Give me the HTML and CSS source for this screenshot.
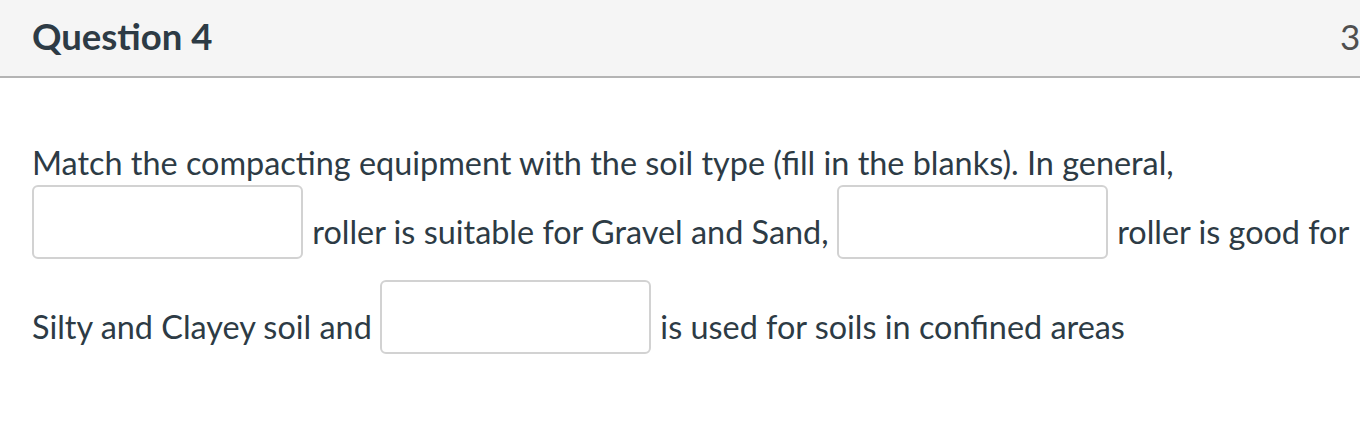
FILE: index.html
```html
<!DOCTYPE html>
<html lang="en">
<head>
<meta charset="utf-8">
<title>Question 4</title>
<link rel="stylesheet" href="styles.css">
</head>
<body>
<div class="quiz-question">
  <div class="header">
    <h2 class="title">Question 4</h2>
    <span class="points">3 pts</span>
  </div>
  <div class="body">
    <p class="text">Match the compacting equipment with the soil type (fill in the blanks). In general, <input class="blank" type="text" aria-label="Blank 1"> roller is suitable for Gravel and Sand, <input class="blank" type="text" aria-label="Blank 2"> roller is good for Silty and Clayey soil and <input class="blank" type="text" aria-label="Blank 3"> is used for soils in confined areas</p>
  </div>
</div>
</body>
</html>
```
FILE: styles.css
```css
html, body {
  margin: 0;
  padding: 0;
  background: #ffffff;
}
body {
  font-family: Lato, "Open Sans", sans-serif;
  color: #2d3b45;
  overflow: hidden;
}
.quiz-question {
  width: 1400px;
}
.header {
  display: flex;
  justify-content: space-between;
  align-items: center;
  height: 72px;
  background: #f5f5f5;
  border-bottom: 2px solid #b4b4b4;
  padding: 0 0 4px 32px;
}
.title {
  margin: 0;
  font-size: 36.5px;
  font-weight: 700;
  color: #2d3b45;
}
.points {
  font-size: 35px;
  color: #4f4f4f;
  white-space: nowrap;
  width: 60px;
}
.body {
  width: 1328px;
  padding: 61px 0 0 32px;
}
.text {
  margin: 0;
  font-size: 32.4px;
  line-height: 48.75px;
}
.blank {
  display: inline-block;
  box-sizing: border-box;
  width: 271px;
  height: 74px;
  margin: -2.5px 1px 23.5px 0;
  padding: 0 10px;
  border: 2px solid #d2d2d2;
  border-radius: 6px;
  background: #fff;
  vertical-align: middle;
  font: inherit;
}
```
